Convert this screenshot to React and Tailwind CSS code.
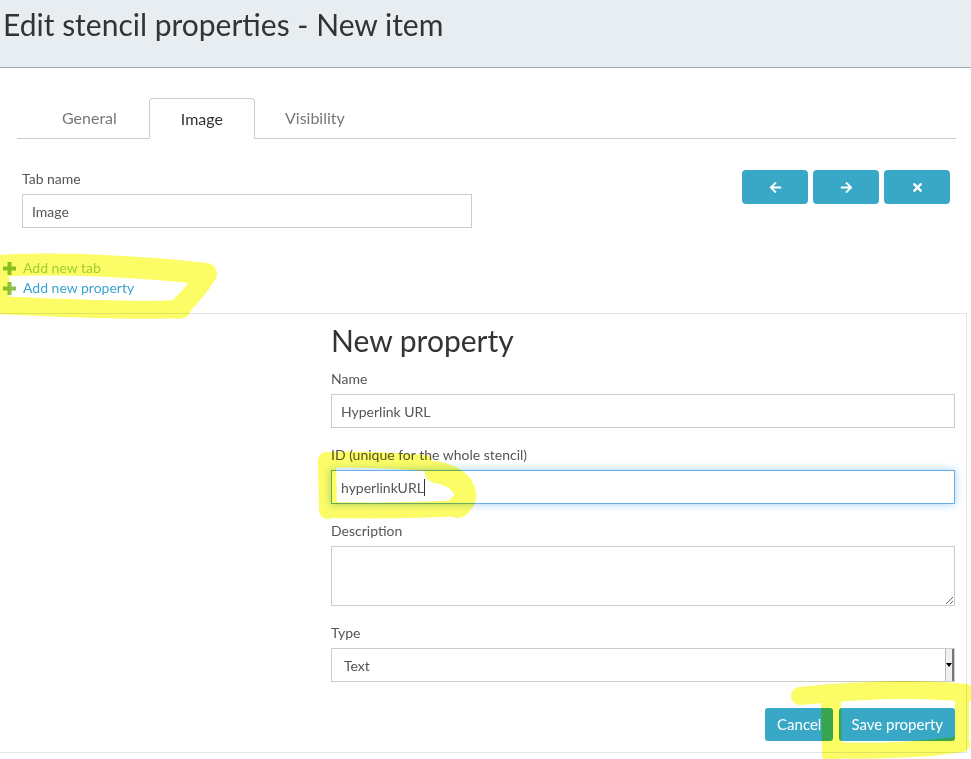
import React from "react";
import { FaArrowLeft, FaArrowRight, FaTimes } from "react-icons/fa";

const labelCls = "block h-5 leading-5 mb-[5px] text-[14px] text-[#555]";
const inputCls = "w-full h-[34px] border border-[#ccc] px-[9px] flex items-center text-[14px] text-[#555] bg-white";

function Field({ label, children, className = "mb-[17px]" }) {
  return (
    <div className={className}>
      <div className={labelCls}>{label}</div>
      {children}
    </div>
  );
}

function Plus() {
  return (
    <svg width="13" height="13" viewBox="0 0 13 13" className="shrink-0">
      <path d="M4.5 0h4v4.5H13v4H8.5V13h-4V8.5H0v-4h4.5z" fill="#8cc152" />
    </svg>
  );
}

function Highlighter() {
  return (
    <svg className="absolute inset-0 pointer-events-none mix-blend-multiply" width="971" height="759" viewBox="0 0 971 759" fill="none" stroke="#fcfc66" strokeLinecap="round" strokeLinejoin="round">
      {/* around the add links */}
      <path d="M-5 266 C60 262 150 267 206 274" strokeWidth="22" />
      <path d="M204 278 C196 292 186 301 178 309" strokeWidth="20" />
      <path d="M182 309 C120 312 50 307 -5 305" strokeWidth="18" />
      <path d="M4 272 L4 302" strokeWidth="10" />
      {/* around the id */}
      <path d="M326 460 C360 458 395 461 425 463" strokeWidth="16" />
      <path d="M327 462 L328 510" strokeWidth="18" />
      <path d="M436 472 C466 478 472 498 458 507" strokeWidth="22" />
      <path d="M327 510 C380 511 430 510 462 508" strokeWidth="16" />
      {/* around save */}
      <path d="M800 696 C860 690 920 688 966 693" strokeWidth="18" />
      <path d="M831 698 L832 754" strokeWidth="20" />
      <path d="M832 750 C880 752 930 749 962 744" strokeWidth="16" />
      <path d="M962 696 L962 738" strokeWidth="14" />
    </svg>
  );
}

export default function App() {
  return (
    <div className="relative w-[971px] h-[759px] overflow-hidden bg-white font-['Lato','Open_Sans',sans-serif] text-[#333]">
      <header className="h-[68px] bg-[#e8edf1] border-b border-[#a3acb7] pl-[3px] pt-[5px]">
        <h1 className="text-[30px] leading-[38px] font-normal text-[#333]">Edit stencil properties - New item</h1>
      </header>

      <div className="px-[17px] pr-[15px] mt-[30px]">
        <ul className="flex pl-[14px] border-b border-[#ccc] h-[41px]">
          <li className="h-10 px-[31px] mr-px flex items-center text-[16px] text-[#777]">General</li>
          <li className="h-[41px] px-[31px] flex items-center text-[16px] text-[#333] bg-white border border-[#ccc] border-b-white rounded-t-[4px]">Image</li>
          <li className="h-10 px-[30px] flex items-center text-[16px] text-[#777]">Visibility</li>
        </ul>
      </div>

      <div className="flex justify-between pl-[22px] pr-[21px] mt-[30px]">
        <div className="w-[450px]">
          <div className={labelCls}>Tab name</div>
          <div className={inputCls}>Image</div>
        </div>
        <div className="flex gap-[5px] pt-px">
          {[FaArrowLeft, FaArrowRight, FaTimes].map((Icon, i) => (
            <button key={i} className="w-[66px] h-[34px] rounded-[4px] bg-[#39a8c6] flex items-center justify-center text-white">
              <Icon className="w-[13px] h-[13px]" />
            </button>
          ))}
        </div>
      </div>

      <div className="mt-[30px] pl-[3px] text-[14px] leading-5">
        <div className="flex items-center gap-[7px] text-[#a3d26a]">
          <Plus />
          <span>Add new tab</span>
        </div>
        <div className="flex items-center gap-[7px] text-[#3aa3cf]">
          <Plus />
          <span>Add new property</span>
        </div>
      </div>

      <section className="mt-[15px] w-[967px] h-[440px] border-t border-r border-b border-[#e5e5e5] pl-[331px] pr-[11px] pt-[9px]">
        <h2 className="text-[30px] leading-[34px] font-normal text-[#333] mb-[12px]">New property</h2>

        <Field label="Name">
          <div className={inputCls}>Hyperlink URL</div>
        </Field>

        <Field label="ID (unique for the whole stencil)">
          <div className="w-full h-[34px] border border-[#66afe9] shadow-[0_0_8px_rgba(102,175,233,0.6)] px-[9px] flex items-center text-[14px] text-[#555] bg-white">
            <span>hyperlinkURL</span>
            <span className="w-px h-[17px] bg-[#333]" />
          </div>
        </Field>

        <Field label="Description">
          <textarea className="block w-full h-[60px] border border-[#ccc] bg-white outline-none" readOnly />
        </Field>

        <Field label="Type" className="mb-[26px]">
          <div className="w-full h-[34px] border border-[#ccc] pl-[12px] flex items-center justify-between text-[14px] text-[#555] bg-white">
            <span>Text</span>
            <div className="h-full w-[9px] bg-[#f0f0f0] border-l border-[#bbb] border-r-2 border-r-[#777] flex items-center justify-center">
              <div className="w-0 h-0 border-l-[3px] border-r-[3px] border-t-[4px] border-l-transparent border-r-transparent border-t-black" />
            </div>
          </div>
        </Field>

        <div className="flex justify-end gap-[6px]">
          <button className="h-[33px] px-[12px] rounded-[3px] bg-[#39a8c6] text-white text-[15px]">Cancel</button>
          <button className="h-[33px] px-[12px] rounded-[3px] bg-[#39a8c6] text-white text-[15px]">Save property</button>
        </div>
      </section>

      <Highlighter />
    </div>
  );
}
